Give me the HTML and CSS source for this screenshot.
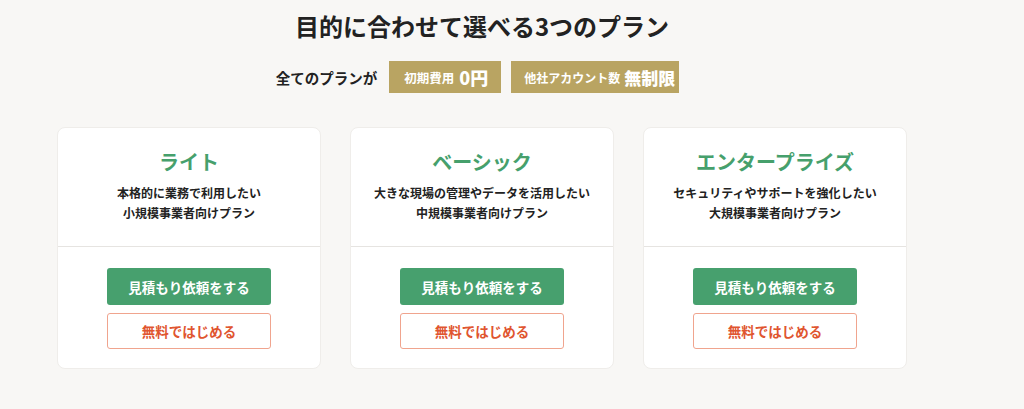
FILE: index.html
```html
<!DOCTYPE html>
<html lang="ja">
<head>
    <meta charset="UTF-8">
    <meta name="viewport" content="width=device-width, initial-scale=1.0">
    <title>料金プラン</title>
    <link rel="stylesheet" href="styles.css">
</head>
<body>

    <main class="plans">
        <h1 class="plans-title">目的に合わせて選べる3つのプラン</h1>

        <!-- 全プラン共通の特典 -->
        <div class="perks">
            <span class="perks-lead">全てのプランが</span>
            <span class="perk"><small>初期費用</small><strong>0円</strong></span>
            <span class="perk perk-wide"><small>他社アカウント数</small><strong>無制限</strong></span>
        </div>

        <!-- プラン一覧 -->
        <div class="plan-list">
            <section class="plan">
                <div class="plan-head">
                    <h2 class="plan-name">ライト</h2>
                    <p class="plan-desc">本格的に業務で利用したい<br>小規模事業者向けプラン</p>
                </div>
                <div class="plan-actions">
                    <a class="btn btn-primary" href="#">見積もり依頼をする</a>
                    <a class="btn btn-outline" href="#">無料ではじめる</a>
                </div>
            </section>

            <section class="plan">
                <div class="plan-head">
                    <h2 class="plan-name">ベーシック</h2>
                    <p class="plan-desc">大きな現場の管理やデータを活用したい<br>中規模事業者向けプラン</p>
                </div>
                <div class="plan-actions">
                    <a class="btn btn-primary" href="#">見積もり依頼をする</a>
                    <a class="btn btn-outline" href="#">無料ではじめる</a>
                </div>
            </section>

            <section class="plan">
                <div class="plan-head">
                    <h2 class="plan-name">エンタープライズ</h2>
                    <p class="plan-desc">セキュリティやサポートを強化したい<br>大規模事業者向けプラン</p>
                </div>
                <div class="plan-actions">
                    <a class="btn btn-primary" href="#">見積もり依頼をする</a>
                    <a class="btn btn-outline" href="#">無料ではじめる</a>
                </div>
            </section>
        </div>
    </main>

</body>
</html>
```

FILE: styles.css
```css
body {
    margin: 0;
    background-color: #f8f7f5;
    color: #222;
    font-family: "Noto Sans CJK JP", "Noto Sans", sans-serif;
}
.plans {
    width: 850px;
    margin-left: 57px;
    padding-top: 8px;
}
.plans-title {
    margin: 0;
    font-size: 24px;
    line-height: 36px;
    font-weight: 700;
    text-align: center;
}
.perks {
    display: flex;
    justify-content: center;
    align-items: center;
    gap: 10px;
    margin-top: 17px;
    padding-right: 9px;
    height: 32px;
}
.perks-lead {
    font-size: 14.5px;
    font-weight: 700;
    margin-right: 2px;
}
.perk {
    display: flex;
    align-items: center;
    gap: 5px;
    height: 32px;
    padding: 0 13px 0 15px;
    background: #b9a462;
    color: #fff;
    font-weight: 700;
}
.perk-wide {
    gap: 4px;
    padding: 0 4px 0 13px;
}
.perk small {
    font-size: 12.5px;
}
.perk-wide small {
    font-size: 12px;
}
.perk strong {
    font-size: 18px;
}
.perk-wide strong {
    font-size: 17px;
}
.plan-list {
    display: grid;
    grid-template-columns: repeat(3, 1fr);
    gap: 29px;
    margin-top: 34px;
}
.plan {
    background: white;
    border: 1px solid #efedea;
    border-radius: 8px;
}
.plan-head {
    padding: 20px 10px 23px;
    border-bottom: 1px solid #e6e4e1;
    text-align: center;
}
.plan-name {
    margin: 0;
    font-size: 20px;
    line-height: 28px;
    color: #46a06c;
}
.plan-desc {
    margin: 7px 0 0;
    font-size: 12px;
    line-height: 20px;
    font-weight: 700;
}
.plan-actions {
    display: flex;
    flex-direction: column;
    align-items: center;
    gap: 8px;
    padding: 21px 0 19px;
}
.btn {
    display: flex;
    justify-content: center;
    align-items: center;
    box-sizing: border-box;
    width: 164px;
    border-radius: 3px;
    font-size: 13.5px;
    font-weight: 700;
    text-decoration: none;
}
.btn-primary {
    height: 37px;
    background: #47a06e;
    color: white;
}
.btn-outline {
    height: 36px;
    border: 1px solid #f0a48e;
    color: #e0552f;
}
```
